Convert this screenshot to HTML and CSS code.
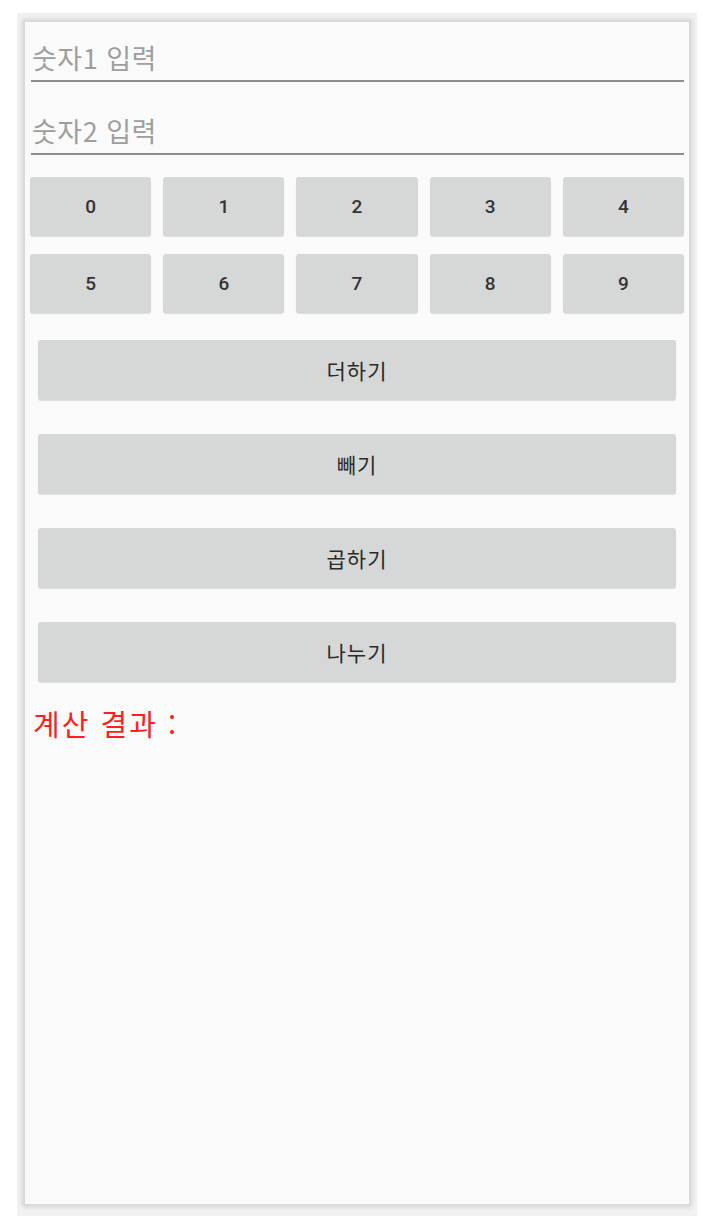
FILE: index.html
```html
<!DOCTYPE html>
<html lang="ko">
<head>
    <meta charset="UTF-8">
    <meta name="viewport" content="width=device-width, initial-scale=1.0">
    <title>계산기</title>
    <link rel="stylesheet" href="styles.css">
</head>
<body>
    <div class="frame">
        <div class="screen">
            <div class="field field-first"><span class="hint">숫자1 입력</span></div>
            <div class="field"><span class="hint">숫자2 입력</span></div>

            <div class="num-grid">
                <button class="num-btn">0</button>
                <button class="num-btn">1</button>
                <button class="num-btn">2</button>
                <button class="num-btn">3</button>
                <button class="num-btn">4</button>
                <button class="num-btn">5</button>
                <button class="num-btn">6</button>
                <button class="num-btn">7</button>
                <button class="num-btn">8</button>
                <button class="num-btn">9</button>
            </div>

            <div class="ops">
                <button class="op-btn">더하기</button>
                <button class="op-btn">빼기</button>
                <button class="op-btn">곱하기</button>
                <button class="op-btn">나누기</button>
            </div>

            <div class="result">계산 결과 :</div>
        </div>
    </div>
</body>
</html>
```

FILE: styles.css
```css
body {
    margin: 0;
    padding: 0;
    background: #ffffff;
    font-family: "Noto Sans CJK KR", Roboto, "Noto Sans", sans-serif;
}

.frame {
    margin: 13px 10px 0 17px;
    width: 680px;
    height: 1203px;
    box-sizing: border-box;
    padding: 8px 7px 11px 7px;
    background: #f1f1f1;
}

.screen {
    height: 100%;
    box-sizing: border-box;
    background: #fafafa;
    border: 1px solid #d9d9d9;
    box-shadow: 0 0 4px 2px rgba(0, 0, 0, 0.12);
    display: flex;
    flex-direction: column;
}

.field {
    height: 61px;
    margin: 12px 5px 0 6px;
    box-sizing: border-box;
    border-bottom: 2px solid #8e8e8e;
    display: flex;
    align-items: flex-end;
    padding: 0 0 5px 1px;
}
.field-first {
    margin-top: -1px;
}

.hint {
    font-size: 27px;
    line-height: 34px;
    color: #9e9e9e;
    letter-spacing: 0.5px;
}

.num-grid {
    display: grid;
    grid-template-columns: repeat(5, 1fr);
    column-gap: 12px;
    row-gap: 18px;
    margin: 22px 5px 0 5px;
}

.num-btn {
    height: 59px;
    border: none;
    border-radius: 3px;
    background: #d6d7d7;
    box-shadow: 0 1px 1px rgba(0, 0, 0, 0.12);
    font-family: Roboto, "Noto Sans", sans-serif;
    font-weight: 500;
    font-size: 19px;
    color: #333333;
    padding: 0;
}

.ops {
    display: flex;
    flex-direction: column;
    gap: 34px;
    margin: 27px 13px 0 13px;
}

.op-btn {
    height: 60px;
    border: none;
    border-radius: 3px;
    background: #d6d7d7;
    box-shadow: 0 1px 1px rgba(0, 0, 0, 0.12);
    font-family: "Noto Sans CJK KR", sans-serif;
    font-size: 21px;
    letter-spacing: 1px;
    color: #2b2b2b;
    padding: 0;
}

.result {
    margin: 22px 0 0 8px;
    font-size: 29px;
    line-height: 38px;
    letter-spacing: 2px;
    color: #ff1d1d;
}
```
